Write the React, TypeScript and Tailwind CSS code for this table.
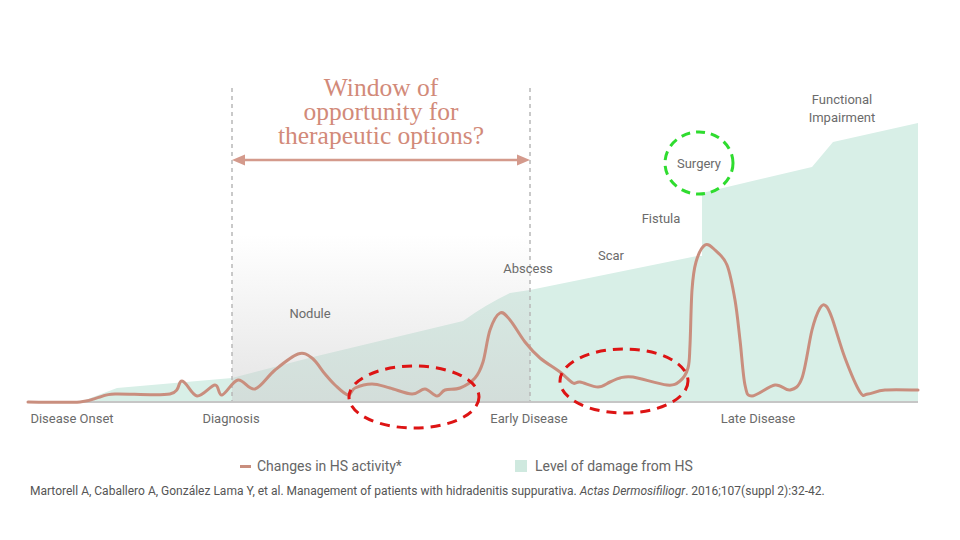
const activity: [number, number][] = [
  [28, 402], [80, 402], [100, 397], [115, 394], [170, 394], [182, 381], [197, 396],
  [215, 385], [222, 395], [238, 380], [255, 389], [275, 370], [298, 354], [312, 358],
  [325, 374], [335, 385], [348, 395], [355, 388], [372, 384], [390, 388], [412, 394],
  [425, 389], [437, 396], [445, 390], [460, 388], [475, 378], [483, 362], [490, 330],
  [500, 313], [510, 320], [525, 342], [540, 358], [560, 372], [573, 383], [580, 382],
  [598, 387], [610, 382], [620, 378], [633, 377], [667, 385], [680, 381], [688, 368],
  [690, 345], [692, 290], [696, 262], [705, 245], [715, 250], [727, 265], [735, 300],
  [740, 340], [745, 385], [752, 396], [775, 385], [790, 390], [802, 378], [812, 330],
  [820, 308], [826, 306], [832, 318], [845, 358], [860, 392], [868, 394], [885, 390],
  [918, 390],
];

function smoothPath(pts: [number, number][]) {
  let d = `M${pts[0][0]},${pts[0][1]}`;
  for (let i = 0; i < pts.length - 1; i++) {
    const p0 = pts[i - 1] || pts[i];
    const p1 = pts[i];
    const p2 = pts[i + 1];
    const p3 = pts[i + 2] || p2;
    const c1x = p1[0] + (p2[0] - p0[0]) / 6;
    const c1y = p1[1] + (p2[1] - p0[1]) / 6;
    const c2x = p2[0] - (p3[0] - p1[0]) / 6;
    const c2y = p2[1] - (p3[1] - p1[1]) / 6;
    d += ` C${c1x},${c1y} ${c2x},${c2y} ${p2[0]},${p2[1]}`;
  }
  return d;
}

const labels: { t: string; x: number; y: number }[] = [
  { t: 'Disease Onset', x: 72, y: 423 },
  { t: 'Diagnosis', x: 231, y: 423 },
  { t: 'Early Disease', x: 529, y: 423 },
  { t: 'Late Disease', x: 758, y: 423 },
  { t: 'Nodule', x: 310, y: 318 },
  { t: 'Abscess', x: 528, y: 273 },
  { t: 'Scar', x: 611, y: 260 },
  { t: 'Fistula', x: 661, y: 223 },
  { t: 'Surgery', x: 699, y: 168 },
  { t: 'Functional', x: 842, y: 104 },
  { t: 'Impairment', x: 842, y: 122 },
];

function Chart() {
  return (
    <svg width="960" height="440" viewBox="0 0 960 440" className="block">
      <defs>
        <linearGradient id="win" x1="0" y1="0" x2="0" y2="1">
          <stop offset="0" stopColor="#cfcfcf" stopOpacity="0" />
          <stop offset="1" stopColor="#cfcfcf" stopOpacity="0.55" />
        </linearGradient>
      </defs>

      {/* damage area */}
      <path
        d="M80,402 L117,388 L232,378 L313,357 L463,321 Q485,305 510,293 L530,290 L697,256 L702,256 L702,193 L812,167 L833,142 L918,123 L918,402 Z"
        fill="#d8efe7"
      />
      {/* window shading */}
      <rect x="232" y="235" width="298" height="167" fill="url(#win)" />

      {/* dashed guides */}
      <line x1="232" y1="88" x2="232" y2="402" stroke="#b8b8b8" strokeWidth="1.5" strokeDasharray="4 4" />
      <line x1="530" y1="88" x2="530" y2="402" stroke="#b8b8b8" strokeWidth="1.5" strokeDasharray="4 4" />

      {/* arrow */}
      <line x1="240" y1="160" x2="522" y2="160" stroke="#d49a8c" strokeWidth="2.5" />
      <path d="M232,160 L245,154.5 L245,165.5 Z" fill="#d49a8c" />
      <path d="M530,160 L517,154.5 L517,165.5 Z" fill="#d49a8c" />

      <g fontFamily="'Liberation Serif', serif" fontSize="25.5" fill="#d28a79" textAnchor="middle">
        <text x="381" y="96">Window of</text>
        <text x="381" y="120">opportunity for</text>
        <text x="381" y="144">therapeutic options?</text>
      </g>

      {/* baseline */}
      <line x1="28" y1="402" x2="918" y2="402" stroke="#c6c6c6" strokeWidth="2" />

      {/* activity line */}
      <path
        d={smoothPath(activity)}
        fill="none"
        stroke="#c98e7e"
        strokeWidth="3"
        strokeLinejoin="round"
        strokeLinecap="round"
      />

      {/* callouts */}
      <ellipse cx="414" cy="397" rx="65" ry="31" fill="none" stroke="#dd1414" strokeWidth="3" strokeDasharray="10 7" />
      <ellipse cx="624" cy="381" rx="64" ry="32" fill="none" stroke="#dd1414" strokeWidth="3" strokeDasharray="10 7" />
      <ellipse cx="699" cy="163" rx="34" ry="31" fill="none" stroke="#2fdc2f" strokeWidth="3" strokeDasharray="9 6" />

      <g fontFamily="Roboto, 'Liberation Sans', sans-serif" fontSize="13" fill="#6b6b6b" textAnchor="middle">
        {labels.map((l) => (
          <text key={l.t} x={l.x} y={l.y}>
            {l.t}
          </text>
        ))}
      </g>
    </svg>
  );
}

export default function App() {
  return (
    <div className="h-[540px] w-[960px] overflow-hidden bg-white font-['Roboto','Liberation_Sans',sans-serif]">
      <Chart />
      <div className="mt-[18px] flex items-center pl-[240px] text-[14px] leading-4 text-[#666]">
        <div className="flex w-[275px] items-center gap-[6px]">
          <span className="h-[3px] w-[11px] bg-[#c98e7e]" />
          <span>Changes in HS activity*</span>
        </div>
        <div className="flex items-center gap-[8px]">
          <span className="h-[12px] w-[12px] bg-[#cfe9df]" />
          <span>Level of damage from HS</span>
        </div>
      </div>
      <p className="mt-[10px] pl-[30px] text-[12px] leading-[14px] text-[#555]">
        Martorell A, Caballero A, González Lama Y, et al. Management of patients with hidradenitis suppurativa.{' '}
        <i>Actas Dermosifiliogr</i>. 2016;107(suppl 2):32-42.
      </p>
    </div>
  );
}
